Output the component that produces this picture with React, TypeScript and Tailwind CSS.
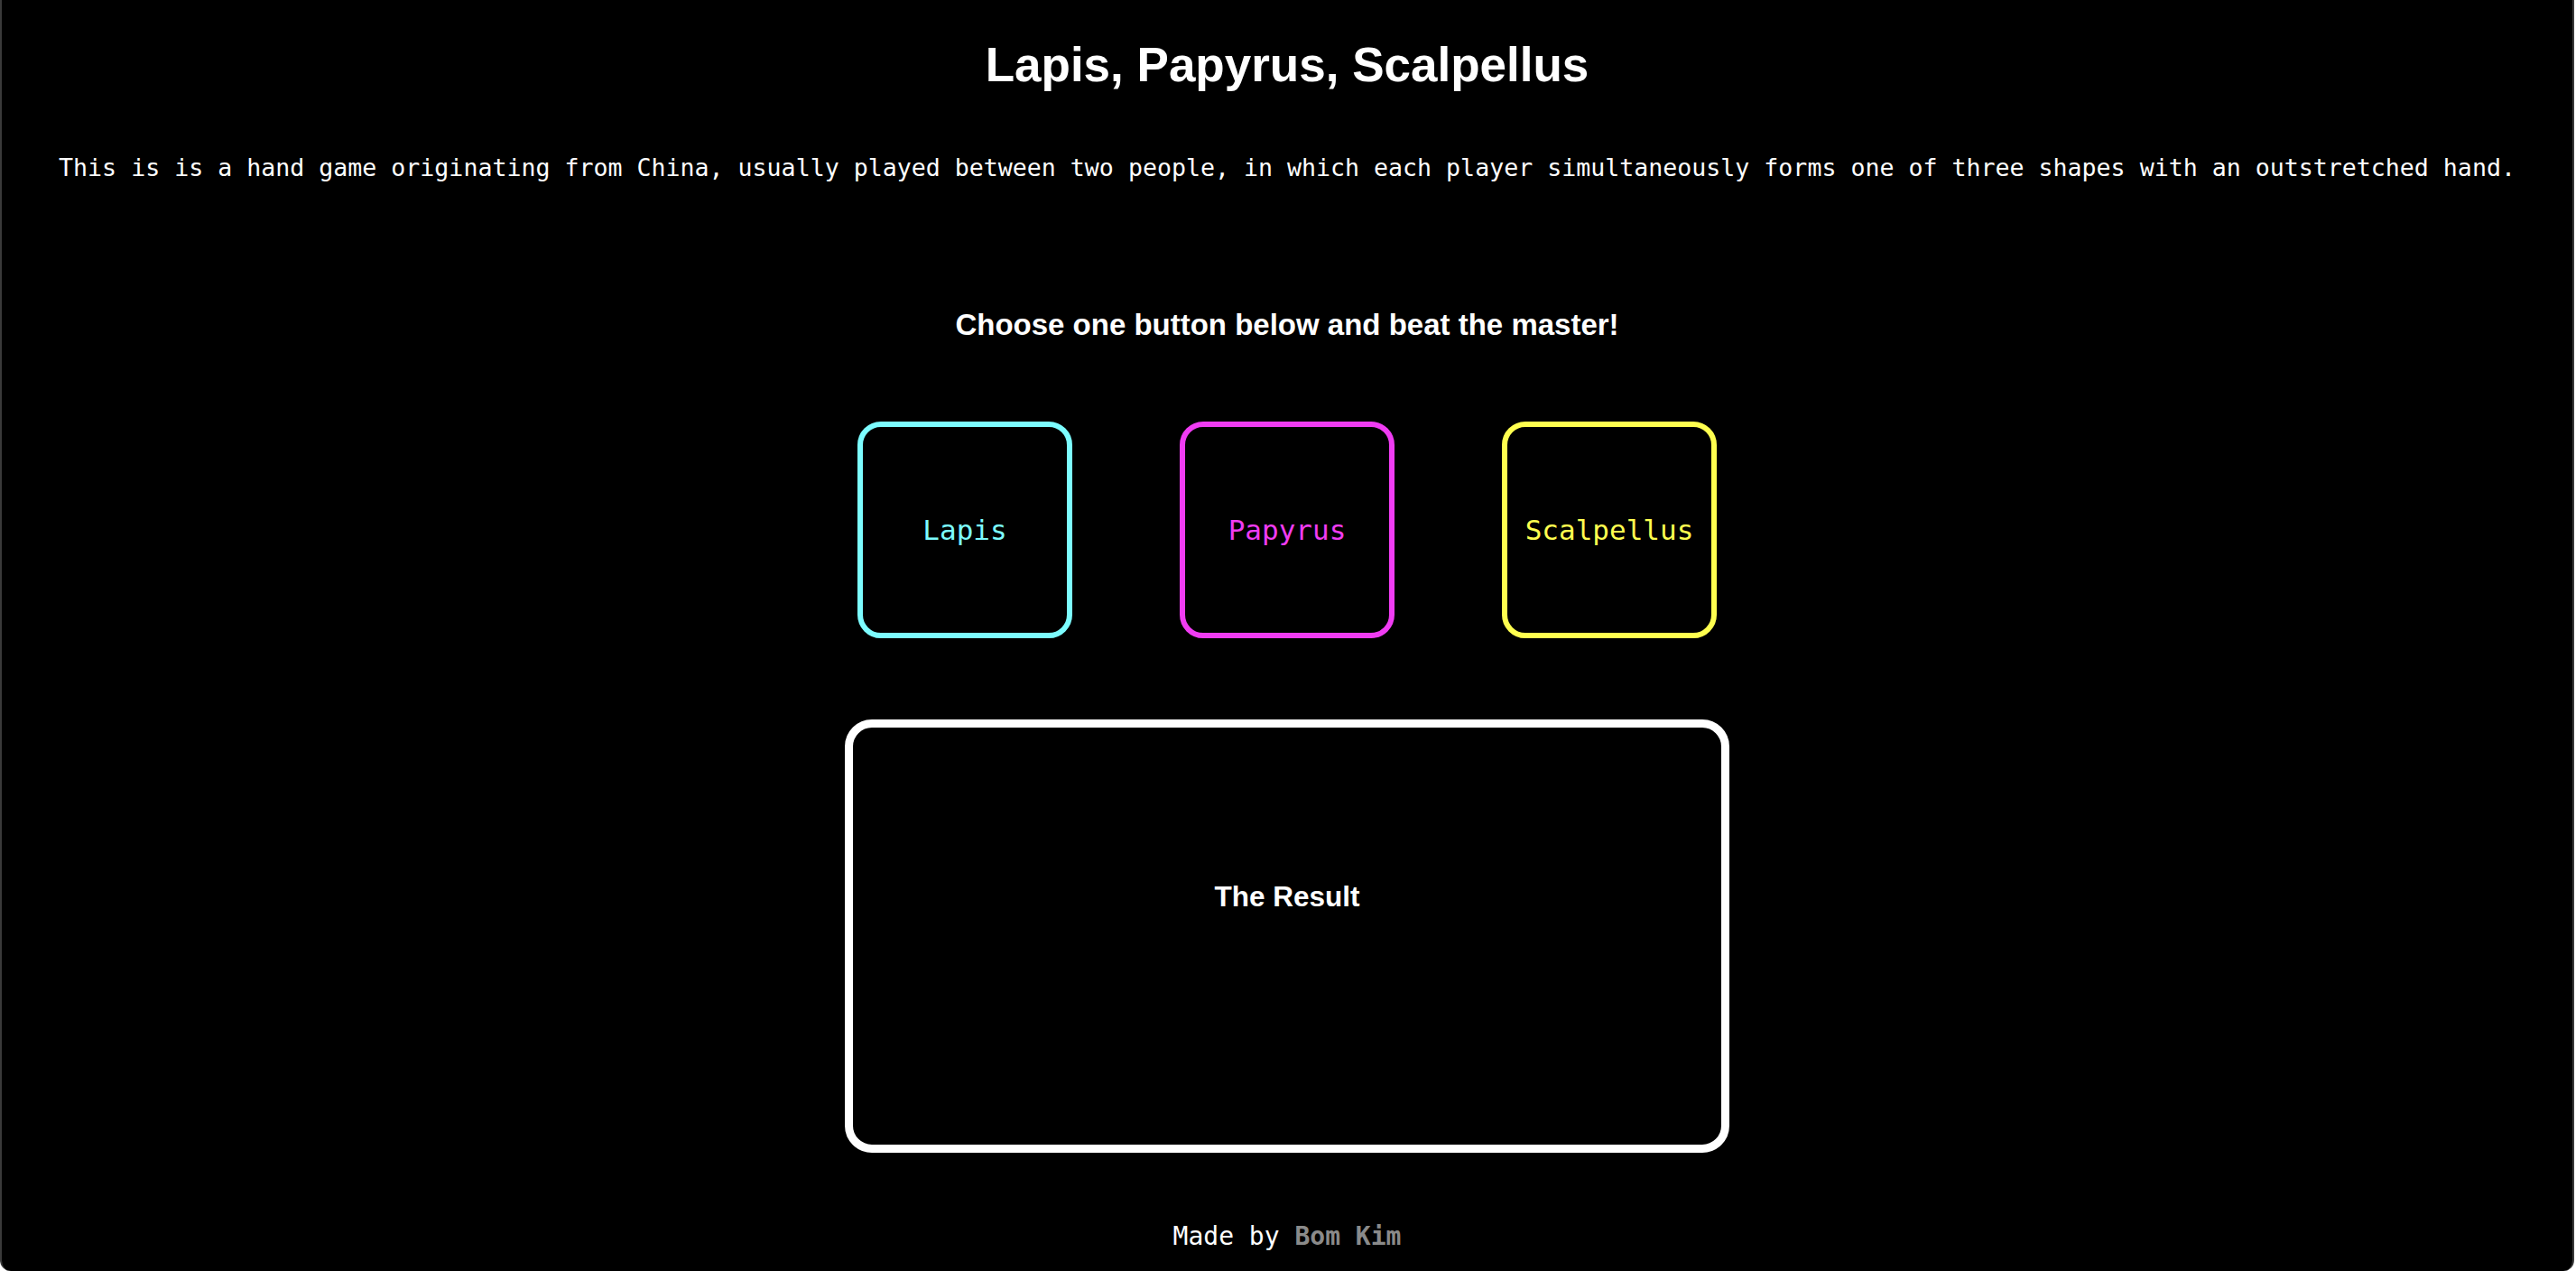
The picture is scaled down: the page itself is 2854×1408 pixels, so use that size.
const choices = [
  { label: "Lapis", color: "border-[#7cfcff] text-[#7cfcff]" },
  { label: "Papyrus", color: "border-[#f03cf3] text-[#f03cf3]" },
  { label: "Scalpellus", color: "border-[#ffff4f] text-[#ffff4f]" },
];

export default function App() {
  return (
    <div className="min-h-screen bg-black text-white flex flex-col items-center border-x-2 border-[#3a3a3a] rounded-b-[12px] mr-[2px]">
      <h1 className="mt-[45px] text-[53px] leading-none font-bold font-['Liberation_Sans',Arial,sans-serif]">
        Lapis, Papyrus, Scalpellus
      </h1>
      <p className="mt-[72px] text-[26.6px] leading-[32px] font-['DejaVu_Sans_Mono',monospace]">
        This is is a hand game originating from China, usually played between two people, in which each player simultaneously forms one of three shapes with an outstretched hand.
      </p>
      <h2 className="mt-[141px] text-[33px] leading-none font-bold font-['Liberation_Sans',Arial,sans-serif]">
        Choose one button below and beat the master!
      </h2>

      <div className="mt-[91px] flex gap-[119px]">
        {choices.map((c) => (
          <button
            key={c.label}
            className={`w-[238px] h-[240px] border-[6px] rounded-[26px] bg-black flex items-center justify-center text-[31px] font-['DejaVu_Sans_Mono',monospace] ${c.color}`}
          >
            {c.label}
          </button>
        ))}
      </div>

      <div className="mt-[90px] w-[980px] h-[480px] border-[9px] border-white rounded-[30px] flex flex-col items-center pt-[172px]">
        <span className="text-[31.5px] leading-none font-bold font-['Liberation_Sans',Arial,sans-serif]">The Result</span>
      </div>

      <footer className="mt-[79px] text-[28px] leading-none font-['DejaVu_Sans_Mono',monospace]">
        Made by <span className="text-[#8a8a8a] font-bold">Bom Kim</span>
      </footer>
    </div>
  );
}
